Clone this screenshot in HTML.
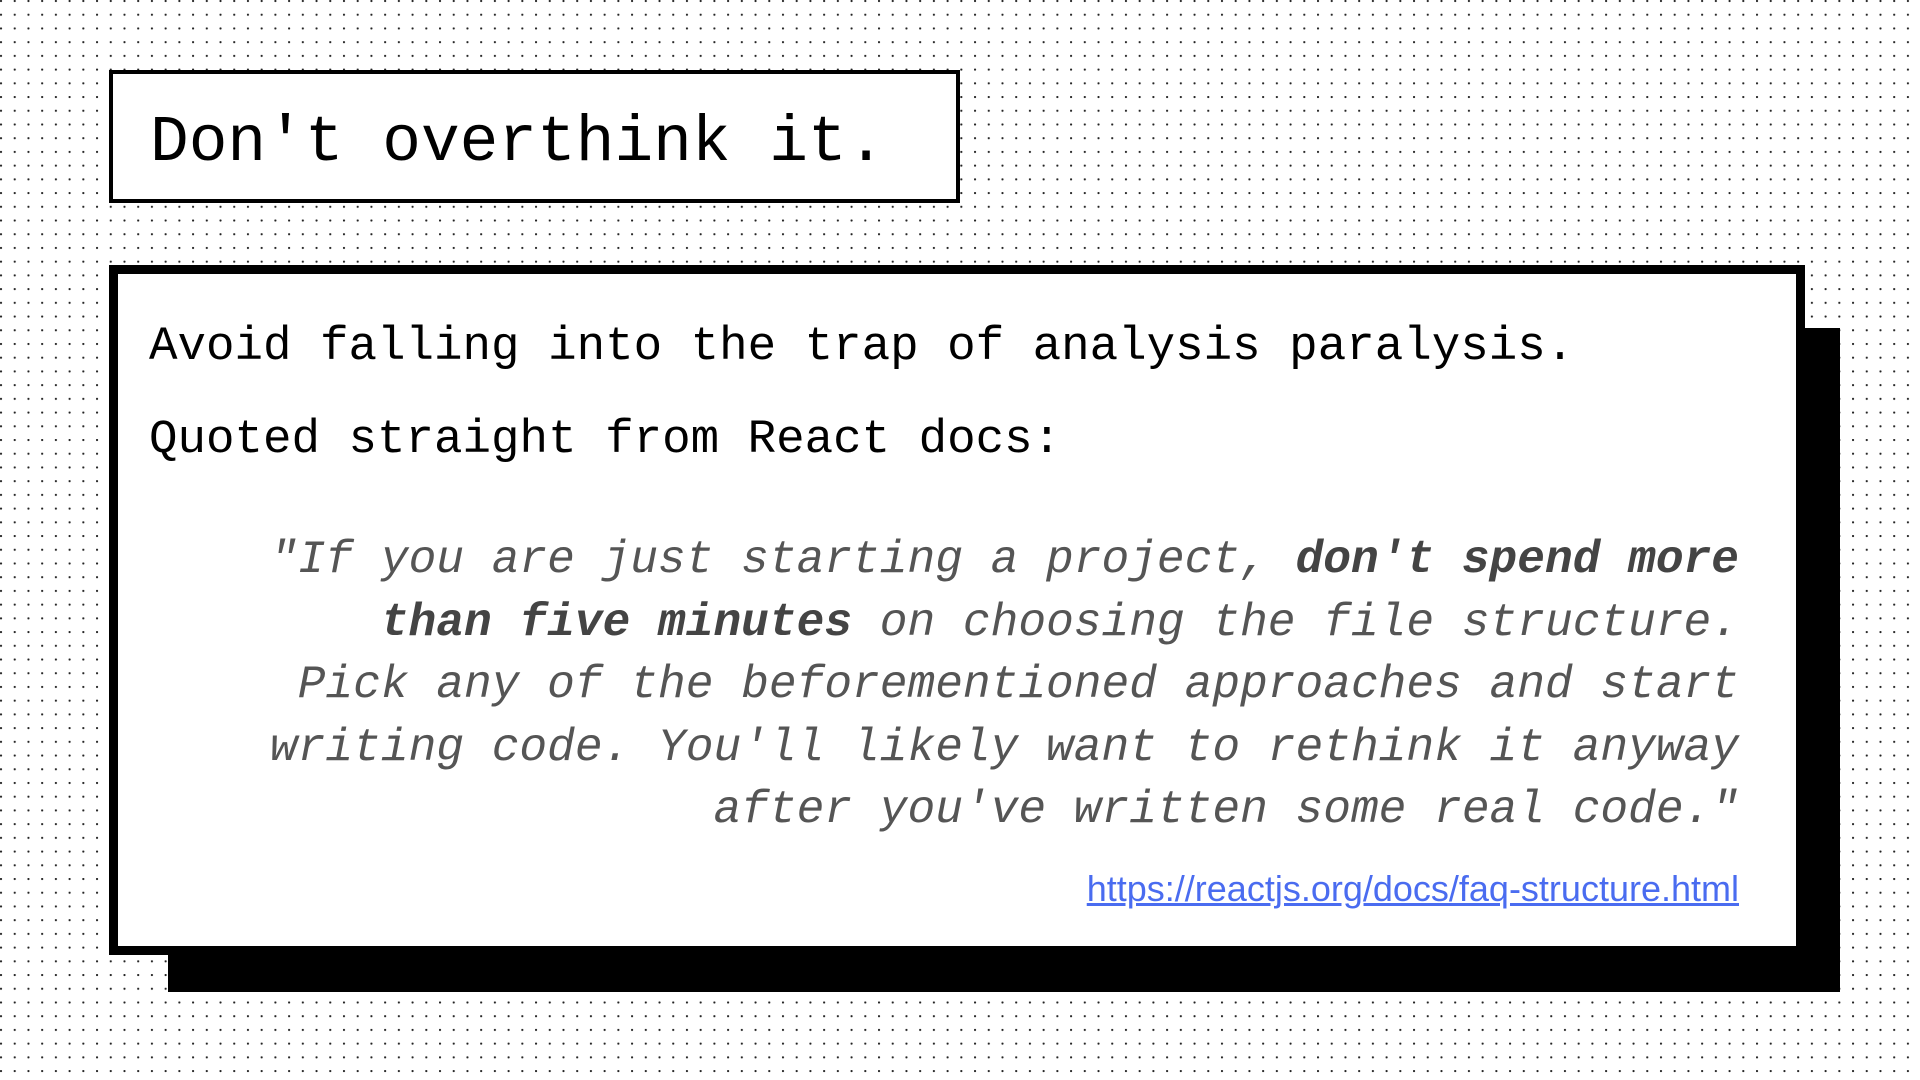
<!DOCTYPE html>
<html><head><style>
html,body{margin:0;padding:0}
body{width:1920px;height:1080px;position:relative;overflow:hidden;background-color:#fff;
background-image:radial-gradient(circle at 1px 1px,#222 0.9px,transparent 1.3px);
background-size:13.72px 13.72px;background-position:0 0;}
.title{position:absolute;left:109px;top:70px;width:843px;height:125px;border:4px solid #000;background:#fff;}
.title span{position:absolute;left:37px;top:38px;font:64.5px/1 "Liberation Mono",monospace;color:#000;white-space:pre}
.shadow{position:absolute;left:168px;top:328px;width:1672px;height:664px;background:#000}
.main{position:absolute;left:109px;top:265px;width:1678px;height:672px;border:9px solid #000;background:#fff}
.t{position:absolute;font-family:"Liberation Mono",monospace;white-space:pre;color:#000}
.l1{left:31px;top:50px;font-size:47.5px;line-height:1}
.l2{left:31px;top:143px;font-size:47.5px;line-height:1}
.q{position:absolute;right:57px;top:255px;text-align:right;font:italic 46.2px/62.5px "Liberation Mono",monospace;color:#555;white-space:pre}
.q b{color:#444}
.link{position:absolute;right:57px;top:594px;font:36px "Liberation Sans",sans-serif;color:#4a6cf0;text-decoration:underline}
</style></head><body>
<div class="title"><span>Don't overthink it.</span></div>
<div class="shadow"></div>
<div class="main">
<div class="t l1">Avoid falling into the trap of analysis paralysis.</div>
<div class="t l2">Quoted straight from React docs:</div>
<div class="q">"If you are just starting a project, <b>don't spend more</b>
<b>than five minutes</b> on choosing the file structure.
Pick any of the beforementioned approaches and start
writing code. You'll likely want to rethink it anyway
after you've written some real code."</div>
<div class="link">https://reactjs.org/docs/faq-structure.html</div>
</div>
</body></html>
